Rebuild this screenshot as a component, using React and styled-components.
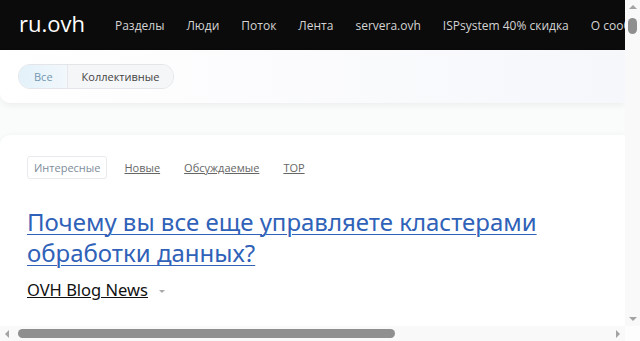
import styled, { createGlobalStyle, css } from "styled-components";

const Global = createGlobalStyle`
  html, body {
    margin: 0;
    padding: 0;
    background: #fafbfb;
    overflow: hidden;
  }
  body {
    font-family: "Open Sans", "Noto Sans", sans-serif;
  }
`;

const navItems = [
  "Разделы",
  "Люди",
  "Поток",
  "Лента",
  "servera.ovh",
  "ISPsystem 40% скидка",
  "О сообществе",
];

const feedTabs = ["Новые", "Обсуждаемые", "TOP"];

const App = () => {
  return (
    <Frame>
      <Global />
      <Page>
        <Header>
          <Logo>ru.ovh</Logo>
          <Nav>
            {navItems.map((item) => (
              <NavLink key={item}>{item}</NavLink>
            ))}
          </Nav>
        </Header>

        <FilterBar>
          <Switch>
            <SwitchItem $active>Все</SwitchItem>
            <SwitchItem>Коллективные</SwitchItem>
          </Switch>
        </FilterBar>

        <Card>
          <Tabs>
            <ActiveTab>Интересные</ActiveTab>
            {feedTabs.map((tab) => (
              <TabLink key={tab}>{tab}</TabLink>
            ))}
          </Tabs>
          <Title href="#">
            Почему вы все еще управляете кластерами обработки данных?
          </Title>
          <Author>
            <AuthorLink href="#">OVH Blog News</AuthorLink>
            <Caret />
          </Author>
        </Card>
      </Page>

      {/* scrollbars of the captured window */}
      <VScroll>
        <Arrow $dir="up" />
        <VTrack>
          <VThumb />
        </VTrack>
        <Arrow $dir="down" />
      </VScroll>
      <HScroll>
        <Arrow $dir="left" />
        <HTrack>
          <HThumb />
        </HTrack>
        <Arrow $dir="right" />
      </HScroll>
      <Corner />
    </Frame>
  );
};
export default App;

const Frame = styled.div`
  position: relative;
  width: 640px;
  height: 341px;
  overflow: hidden;
  background: #fafbfb;
`;

const Page = styled.div`
  width: 625px;
  height: 326px;
  overflow: hidden;
`;

const Header = styled.header`
  height: 50px;
  background: #0b0b0b;
  display: flex;
  align-items: center;
  padding-left: 19px;
`;

const Logo = styled.div`
  color: #fff;
  font-size: 22px;
  margin-right: 30px;
  margin-top: -4px;
`;

const Nav = styled.nav`
  display: flex;
  gap: 22px;
`;

const NavLink = styled.span`
  color: #d4d4d4;
  font-size: 12px;
  white-space: nowrap;
`;

const FilterBar = styled.div`
  height: 53px;
  display: flex;
  align-items: center;
  padding-left: 18px;
  background: linear-gradient(90deg, #ffffff 0%, #f6f7fb 100%);
  border-bottom-left-radius: 10px;
  box-shadow: 0 3px 6px rgba(0, 0, 0, 0.05);
  margin-bottom: 32px;
`;

const Switch = styled.div`
  display: flex;
  height: 23px;
  border: 1px solid #e3e5e9;
  border-radius: 12px;
  overflow: hidden;
`;

const SwitchItem = styled.span`
  display: flex;
  align-items: center;
  font-size: 11px;
  padding: ${(p) => (p.$active ? "0 14px 0 15px" : "0 14px")};
  color: ${(p) => (p.$active ? "#7497b0" : "#444")};
  background: ${(p) =>
    p.$active
      ? "linear-gradient(90deg, #e3f1f9 0%, #f2f8fc 100%)"
      : "#f5f6f8"};
  border-right: ${(p) => (p.$active ? "1px solid #e6e8ec" : "none")};
`;

const Card = styled.div`
  background: #fff;
  border-top-left-radius: 10px;
  box-shadow: 0 -1px 4px rgba(0, 0, 0, 0.03);
  padding: 21px 27px 0;
  min-height: 400px;
`;

const Tabs = styled.div`
  display: flex;
  align-items: center;
  gap: 24px;
`;

const ActiveTab = styled.span`
  font-size: 11px;
  color: #7e8c99;
  border: 1px solid #e8eaed;
  border-radius: 3px;
  padding: 3px 6px;
  margin-right: -7px;
`;

const TabLink = styled.a`
  font-size: 11px;
  color: #666;
  text-decoration: underline;
`;

const Title = styled.a`
  display: block;
  max-width: 560px;
  margin-top: 27px;
  font-family: "Noto Sans", "Open Sans", sans-serif;
  font-size: 24px;
  line-height: 31px;
  color: #2f62b8;
  text-decoration: underline;
  text-decoration-thickness: 1px;
  text-underline-offset: 3px;
`;

const Author = styled.div`
  display: flex;
  align-items: center;
  margin-top: 10px;
`;

const AuthorLink = styled.a`
  font-family: "Noto Sans", "Open Sans", sans-serif;
  font-size: 16.5px;
  color: #111;
  text-decoration: underline;
`;

const Caret = styled.span`
  width: 0;
  height: 0;
  margin-left: 11px;
  margin-top: 3px;
  border-left: 3px solid transparent;
  border-right: 3px solid transparent;
  border-top: 3px solid #aaa;
`;

/* scrollbars */

const VScroll = styled.div`
  position: absolute;
  top: 0;
  right: 0;
  width: 15px;
  height: 326px;
  background: #f9f9f9;
  display: flex;
  flex-direction: column;
  align-items: center;
`;

const HScroll = styled.div`
  position: absolute;
  left: 0;
  bottom: 0;
  width: 625px;
  height: 15px;
  background: #f9f9f9;
  display: flex;
  align-items: center;
`;

const Corner = styled.div`
  position: absolute;
  right: 0;
  bottom: 0;
  width: 15px;
  height: 15px;
  background: #fdfdfd;
`;

const arrowShapes = {
  up: css`
    border-left: 4px solid transparent;
    border-right: 4px solid transparent;
    border-bottom: 4px solid #a3a3a3;
    margin: 5px 0 6px;
  `,
  down: css`
    border-left: 4px solid transparent;
    border-right: 4px solid transparent;
    border-top: 4px solid #a3a3a3;
    margin: 6px 0 5px;
  `,
  left: css`
    border-top: 4px solid transparent;
    border-bottom: 4px solid transparent;
    border-right: 4px solid #a3a3a3;
    margin: 0 6px 0 5px;
  `,
  right: css`
    border-top: 4px solid transparent;
    border-bottom: 4px solid transparent;
    border-left: 4px solid #a3a3a3;
    margin: 0 5px 0 6px;
  `,
};

const Arrow = styled.span`
  flex: none;
  width: 0;
  height: 0;
  ${(p) => arrowShapes[p.$dir]}
`;

const VTrack = styled.div`
  flex: 1;
  width: 100%;
  display: flex;
  justify-content: center;
  padding-top: 3px;
`;

const VThumb = styled.div`
  width: 9px;
  height: 16px;
  border-radius: 5px;
  background: #8f8f8f;
`;

const HTrack = styled.div`
  flex: 1;
  height: 100%;
  display: flex;
  align-items: center;
  padding-left: 3px;
`;

const HThumb = styled.div`
  width: 377px;
  height: 9px;
  border-radius: 5px;
  background: #8f8f8f;
`;
